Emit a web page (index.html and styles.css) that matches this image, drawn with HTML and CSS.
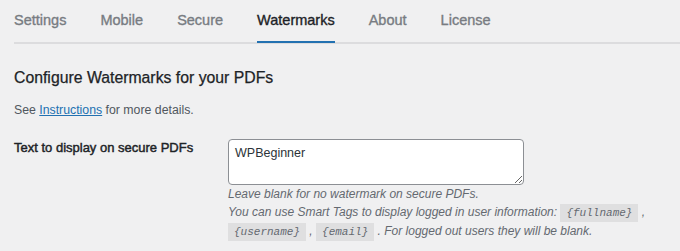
FILE: index.html
```html
<!DOCTYPE html>
<html lang="en">
<head>
  <meta charset="UTF-8" />
  <meta name="viewport" content="width=device-width, initial-scale=1.0" />
  <title>Watermarks</title>
  <link rel="stylesheet" href="styles.css">
</head>
<body>
  <div class="wrap">
    <nav class="tabs">
      <a href="#" class="tab">Settings</a>
      <a href="#" class="tab">Mobile</a>
      <a href="#" class="tab">Secure</a>
      <a href="#" class="tab active">Watermarks</a>
      <a href="#" class="tab">About</a>
      <a href="#" class="tab">License</a>
    </nav>

    <h2 class="heading">Configure Watermarks for your PDFs</h2>
    <p class="intro">See <a href="#">Instructions</a> for more details.</p>

    <div class="row">
      <label class="label" for="wm-text">Text to display on secure PDFs</label>
      <div class="field">
        <textarea id="wm-text" class="input">WPBeginner</textarea>
        <p class="desc">Leave blank for no watermark on secure PDFs.</p>
        <p class="desc">You can use Smart Tags to display logged in user information: <code>{fullname}</code> ,
          <code>{username}</code> , <code>{email}</code> . For logged out users they will be blank.</p>
      </div>
    </div>
  </div>
</body>
</html>
```

FILE: styles.css
```css
* {
  box-sizing: border-box;
  margin: 0;
  padding: 0;
}

body {
  background: #f0f0f1;
  color: #1d2327;
  font-family: "Liberation Sans", Arial, sans-serif;
  font-size: 13px;
  overflow: hidden;
}

.wrap {
  padding-left: 14px;
}

.tabs {
  display: flex;
  gap: 34px;
  padding-top: 10px;
  border-bottom: 2px solid #dcdcde;
}

.tab {
  font-size: 14.5px;
  font-weight: 400;
  -webkit-text-stroke: 0.35px currentColor;
  line-height: 20px;
  color: #787c82;
  text-decoration: none;
  padding-bottom: 11px;
  margin-bottom: -1px;
  border-bottom: 2px solid transparent;
}

.tab.active {
  color: #1d2327;
  border-bottom-color: #2271b1;
}

.heading {
  font-size: 15.8px;
  font-weight: 400;
  -webkit-text-stroke: 0.25px currentColor;
  line-height: 22px;
  margin-top: 23px;
}

.intro {
  color: #50575e;
  font-size: 12.3px;
  line-height: 18px;
  margin-top: 12px;
}

.intro a {
  color: #2271b1;
}

.row {
  display: grid;
  grid-template-columns: 214px 1fr;
  margin-top: 20px;
}

.label {
  font-size: 13px;
  font-weight: 400;
  -webkit-text-stroke: 0.45px currentColor;
  line-height: 18px;
}

.input {
  display: block;
  width: 296px;
  height: 46px;
  border: 1px solid #8c8f94;
  border-radius: 4px;
  background: #fff;
  font-family: "Liberation Sans", Arial, sans-serif;
  font-size: 12.5px;
  line-height: 20px;
  color: #2c3338;
  padding: 3px 6px;
  resize: vertical;
}

.desc {
  color: #646970;
  font-size: 12px;
  font-style: italic;
  line-height: 18px;
}

.desc code {
  background: rgba(0, 0, 0, 0.07);
  font-family: "Liberation Mono", monospace;
  font-style: italic;
  font-size: 11px;
  padding: 3px 6px;
}
```
